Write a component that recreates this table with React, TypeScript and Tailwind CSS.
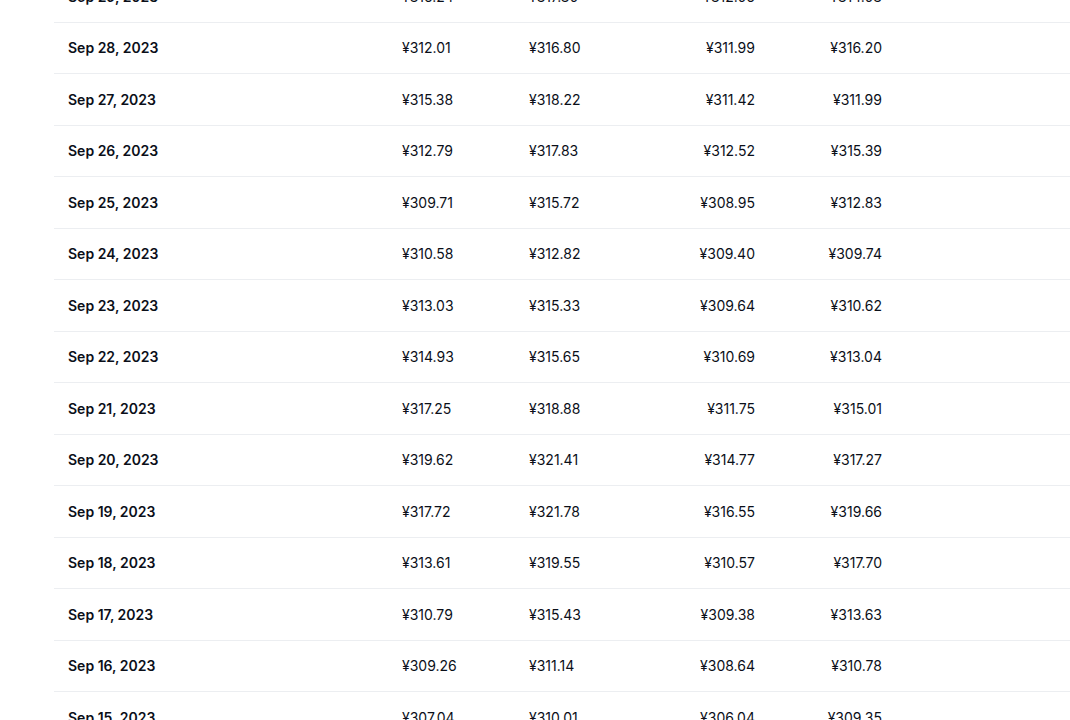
const rows: [string, string, string, string, string][] = [
  ["Sep 29, 2023", "¥316.24", "¥317.30", "¥312.06", "¥314.03"],
  ["Sep 28, 2023", "¥312.01", "¥316.80", "¥311.99", "¥316.20"],
  ["Sep 27, 2023", "¥315.38", "¥318.22", "¥311.42", "¥311.99"],
  ["Sep 26, 2023", "¥312.79", "¥317.83", "¥312.52", "¥315.39"],
  ["Sep 25, 2023", "¥309.71", "¥315.72", "¥308.95", "¥312.83"],
  ["Sep 24, 2023", "¥310.58", "¥312.82", "¥309.40", "¥309.74"],
  ["Sep 23, 2023", "¥313.03", "¥315.33", "¥309.64", "¥310.62"],
  ["Sep 22, 2023", "¥314.93", "¥315.65", "¥310.69", "¥313.04"],
  ["Sep 21, 2023", "¥317.25", "¥318.88", "¥311.75", "¥315.01"],
  ["Sep 20, 2023", "¥319.62", "¥321.41", "¥314.77", "¥317.27"],
  ["Sep 19, 2023", "¥317.72", "¥321.78", "¥316.55", "¥319.66"],
  ["Sep 18, 2023", "¥313.61", "¥319.55", "¥310.57", "¥317.70"],
  ["Sep 17, 2023", "¥310.79", "¥315.43", "¥309.38", "¥313.63"],
  ["Sep 16, 2023", "¥309.26", "¥311.14", "¥308.64", "¥310.78"],
  ["Sep 15, 2023", "¥307.04", "¥310.01", "¥306.04", "¥309.35"],
];

export default function App() {
  return (
    <div className="h-[720px] overflow-hidden bg-white pl-[54px] font-['Inter','Liberation_Sans',sans-serif] text-[14px] text-[#0b0f19]">
      <div className="-mt-[29px]">
        {rows.map(([date, open, high, low, close]) => (
          <div
            key={date}
            className="grid h-[51.5px] grid-cols-[348px_127px_98px_128px_127px_1fr] items-center border-b border-[#eceef1]"
          >
            <span className="pl-[14px] font-semibold">{date}</span>
            <span>{open}</span>
            <span>{high}</span>
            <span className="text-right">{low}</span>
            <span className="text-right">{close}</span>
            <span />
          </div>
        ))}
      </div>
    </div>
  );
}
